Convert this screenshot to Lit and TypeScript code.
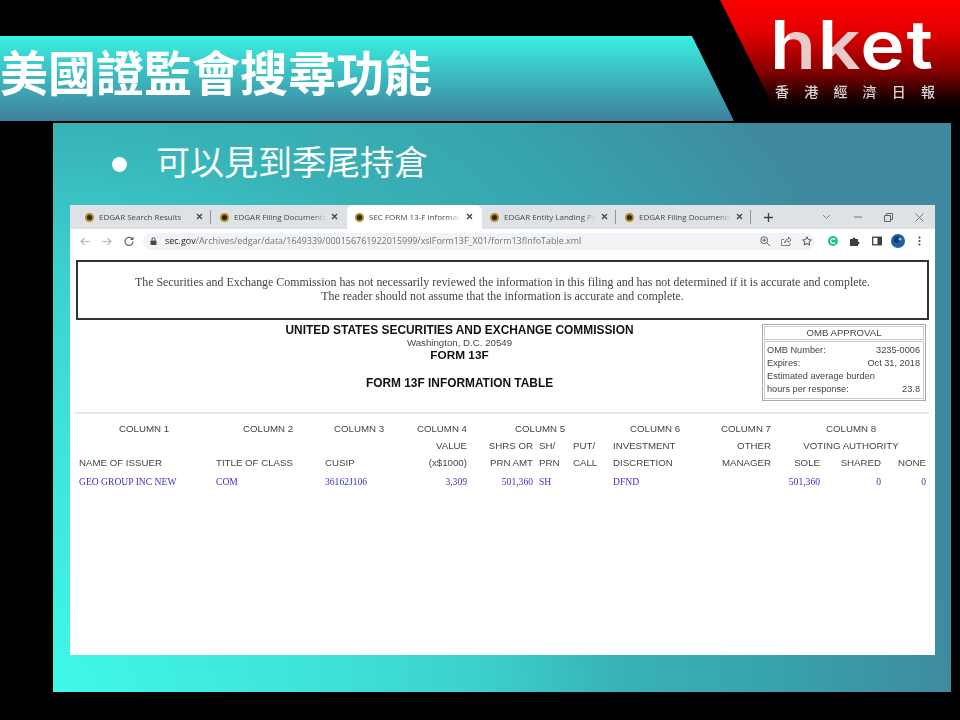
import { LitElement, html, css, svg } from "lit";
import { customElement } from "lit/decorators.js";

const tabs = [
  { t: "EDGAR Search Results", sep: true },
  { t: "EDGAR Filing Documents", sep: false },
  { t: "SEC FORM 13-F Information", active: true, sep: false },
  { t: "EDGAR Entity Landing Page", sep: true },
  { t: "EDGAR Filing Documents", sep: true },
];

const ic = (w: number, h: number, body: unknown) =>
  html`<svg width=${w} height=${h} viewBox="0 0 ${w} ${h}" fill="none">${body}</svg>`;

@customElement("app-root")
export class AppRoot extends LitElement {
  static styles = css`
    :host { display: block; width: 960px; height: 720px; background: #000; overflow: hidden; position: relative; font-family: "Liberation Sans", sans-serif; }
    .logo { position: absolute; top: 0; right: 0; width: 240px; height: 112px; background: linear-gradient(to bottom, #ff0000 0%, #e00000 30%, #8a0000 62%, #1a0000 88%, #000 100%); clip-path: polygon(0 0, 100% 0, 100% 100%, 56px 100%); filter: blur(.5px); }
    .hket { position: absolute; left: 50px; top: 9px; height: 72px; font: 600 67px/72px Inter, sans-serif; letter-spacing: 1.5px; color: transparent; transform: scaleX(1.12); transform-origin: 0 0; background: linear-gradient(to right, #fff 0 17px, #e8caca 18px 38px, #fff 39px 55px, #e8caca 56px 80px, #fff 81px); -webkit-background-clip: text; background-clip: text; }
    .hk-sub { position: absolute; left: 55px; top: 83px; font: 500 14px/16px "Noto Sans CJK TC", sans-serif; color: #d8d8d8; letter-spacing: 15.2px; white-space: nowrap; }
    .band { margin-top: 36px; height: 85px; width: 734px; background: linear-gradient(to bottom, #38f0e4 0%, #3cbcc0 45%, #3f7f9c 100%); clip-path: polygon(0 0, 692px 0, 100% 100%, 0 100%); }
    h1 { margin: 0; padding-top: 4px; font: 700 48px/60px "Noto Sans CJK TC", sans-serif; color: #fff; white-space: nowrap; filter: blur(.3px); }
    .panel { margin: 2px 9px 0 53px; height: 569px; box-sizing: border-box; padding: 0 16px 37px 17px; background: radial-gradient(circle at 0 100%, #40f8e8 0, #3ee4da 250px, #3cd0cc 427px, #38b2b6 569px, #37a3ac 723px, #3f8a9e 898px); display: flex; flex-direction: column; }
    .bullet { height: 82px; padding: 0 0 6px 42px; box-sizing: border-box; display: flex; align-items: center; gap: 29px; color: #fff; font: 400 34px/40px "Noto Sans CJK TC", sans-serif; }
    .dot { width: 15px; height: 15px; border-radius: 50%; background: #fff; margin-top: 6px; }
    .browser { flex: 1; background: #fff; display: flex; flex-direction: column; filter: blur(.35px); }
    .tabs { height: 24px; background: #dee1e6; display: flex; align-items: stretch; padding-left: 7px; position: relative; }
    .tab { width: 135px; flex: none; box-sizing: border-box; display: flex; align-items: center; padding-left: 8px; position: relative; font: 400 8px/10px "Open Sans", sans-serif; color: #45484c; }
    .tab.active { background: #fff; border-radius: 6px 6px 0 0; }
    .tab.sep::after { content: ""; position: absolute; right: 1px; top: 5px; height: 14px; width: 1px; background: #8f9296; }
    .fav { width: 9px; height: 9px; border-radius: 50%; background: #2a2410; box-sizing: border-box; border: 2px solid #b08a20; flex: none; margin-right: 5px; }
    .ttl { width: 92px; height: 11px; overflow: hidden; white-space: nowrap; -webkit-mask-image: linear-gradient(to right, #000 85%, transparent 100%); mask-image: linear-gradient(to right, #000 85%, transparent 100%); }
    .x { position: absolute; left: 119px; top: 8px; display: flex; }
    .plus { margin-left: 12px; align-self: center; display: flex; }
    .win { margin-left: auto; display: flex; align-items: center; gap: 0; padding-right: 0; }
    .win span { width: 31px; display: flex; justify-content: center; }
    .bar { height: 24px; background: #fff; display: flex; align-items: center; padding-left: 10px; }
    .nav { display: flex; align-items: center; gap: 12px; width: 63px; }
    .url { width: 672px; height: 17px; border-radius: 9px; background: #f1f3f4; display: flex; align-items: center; padding: 0 0 1px 7px; box-sizing: border-box; font: 400 8.95px/12px "Open Sans", sans-serif; color: #70757a; white-space: nowrap; gap: 8px; position: relative; }
    .url b { font-weight: 400; color: #202124; }
    .uico { margin-left: auto; display: flex; gap: 11px; padding-right: 3px; align-items: center; }
    .ext { display: flex; align-items: center; gap: 12px; margin-left: 13px; }
    .avatar { margin-left: -3px; display: flex; }
    .dots { margin-left: 1px; display: flex; }
    .page { flex: 1; padding: 7px 6px 0; color: #333; }
    .notice { height: 60px; box-sizing: border-box; border: 2px solid #333; display: flex; flex-direction: column; justify-content: center; align-items: center; font: 400 11.9px/14px "Liberation Serif", serif; color: #444; padding-bottom: 2px; white-space: nowrap; }
    .head { display: flex; height: 92px; box-sizing: border-box; padding: 4px 3px 0 81px; }
    .htext { flex: 1; text-align: center; color: #111; }
    .h-a { font: 700 11.9px/12px "Liberation Sans", sans-serif; }
    .h-b { font: 400 9.7px/13px "Liberation Sans", sans-serif; color: #444; }
    .h-c { font: 700 11.8px/12px "Liberation Sans", sans-serif; }
    .h-d { font: 700 11.9px/12px "Liberation Sans", sans-serif; margin-top: 16px; }
    .omb { width: 164px; height: 77px; box-sizing: border-box; border: 1px solid #aaa; padding: 1px; font: 400 9.2px/13px "Liberation Sans", sans-serif; color: #444; display: flex; flex-direction: column; gap: 1px; }
    .omb-h { height: 14px; border: 1px solid #ccc; box-sizing: border-box; text-align: center; font-size: 9.6px; line-height: 12px; }
    .omb-b { flex: 1; border: 1px solid #ccc; padding: 2px 3px 0 2px; }
    .omb-r { display: flex; justify-content: space-between; }
    .rule { height: 2px; background: #e4e4e4; margin-left: -1px; }
    .grid { display: grid; grid-template-columns: 137px 109px 68px 74px 66px 40px 40px 84px 74px 49px 61px 45px; grid-auto-rows: 17px; margin: 6px 0 0 3px; font: 400 9.7px/17px "Liberation Sans", sans-serif; color: #444; white-space: nowrap; }
    .c { text-align: center; }
    .r { text-align: right; }
    .v { color: #3636c8; font: 400 9.6px/21px "Liberation Serif", serif; }
    .s5 { grid-column: span 3; }
    .s3 { grid-column: span 3; padding-left: 5px; }
    .pr7 { padding-right: 7px; }
    .pr5 { padding-right: 5px; }
    .pl6 { padding-left: 6px; }
  `;

  render() {
    const stroke = "#5f6368";
    const x = ic(7, 7, svg`<path d="M1 1l5 5M6 1L1 6" stroke="#3c4043" stroke-width="1.2"/>`);
    return html`
      <div class="logo">
        <span class="hket">hket</span>
        <span class="hk-sub">香港經濟日報</span>
      </div>
      <div class="band"><h1>美國證監會搜尋功能</h1></div>
      <div class="panel">
        <div class="bullet"><span class="dot"></span><span>可以見到季尾持倉</span></div>
        <div class="browser">
          <div class="tabs">
            ${tabs.map(
              (t) => html`<div class="tab ${t.active ? "active" : ""} ${t.sep ? "sep" : ""}">
                <span class="fav"></span><span class="ttl">${t.t}</span><span class="x">${x}</span>
              </div>`
            )}
            <span class="plus">${ic(9, 9, svg`<path d="M4.5 0v9M0 4.5h9" stroke="#3c4043" stroke-width="1.3"/>`)}</span>
            <div class="win">
              <span>${ic(9, 6, svg`<path d="M1 1l3.5 3.5L8 1" stroke="#80868b" stroke-width="1"/>`)}</span>
              <span>${ic(8, 2, svg`<path d="M0 1h8" stroke="#70757a" stroke-width="1"/>`)}</span>
              <span>${ic(9, 9, svg`<path d="M2.5 2V.5h6v6H7M.5 2.500h6v6h-6z" stroke="#5f6368" stroke-width="1"/>`)}</span>
              <span>${ic(9, 9, svg`<path d="M.5.5l8 8M8.500.5l-8 8" stroke="#70757a" stroke-width="1"/>`)}</span>
            </div>
          </div>
          <div class="bar">
            <div class="nav">
              ${ic(10, 9, svg`<path d="M10 4.500H1M4.500 1L1 4.500 4.500 8" stroke="#b4b7ba" stroke-width="1.100"/>`)}
              ${ic(10, 9, svg`<path d="M0 4.500h9M5.500 1L9 4.500 5.500 8" stroke="#b4b7ba" stroke-width="1.100"/>`)}
              ${ic(10, 10, svg`<path d="M8.500 3.500A4 4 0 1 0 9 5.500" stroke=${stroke} stroke-width="1.200"/><path d="M9.500 .5v3.500H6z" fill=${stroke}/>`)}
            </div>
            <div class="url">
              ${ic(7, 8, svg`<rect x=".5" y="3.500" width="6" height="4.500" rx=".8" fill="#45484c"/><path d="M2 3.500V2.200a1.500 1.500 0 0 1 3 0v1.300" stroke="#45484c"/>`)}
              <span><b>sec.gov</b>/Archives/edgar/data/1649339/000156761922015999/xslForm13F_X01/form13fInfoTable.xml</span>
              <span class="uico">
                ${ic(10, 10, svg`<circle cx="4.200" cy="4.200" r="3.400" stroke=${stroke}/><path d="M6.800 6.800L10 10M2.500 4.200h3.400M4.200 2.500v3.400" stroke=${stroke}/>`)}
                ${ic(10, 10, svg`<path d="M3 3.500H.5v6h8.500V7M3.500 7c.3-2.500 2-4 4-4V1L10 4 7.500 6.500V5C5.800 5 4.500 5.500 3.500 7z" stroke=${stroke} stroke-width=".8"/>`)}
                ${ic(10, 10, svg`<path d="M5 .8l1.300 2.800 3 .4-2.200 2 .6 3L5 7.500 2.300 9l.6-3-2.200-2 3-.4z" stroke="#3c4043" stroke-width=".9"/>`)}
              </span>
            </div>
            <div class="ext">
              ${ic(10, 10, svg`<circle cx="5" cy="5" r="5" fill="#15c39a"/><path d="M7 3.500A2.400 2.400 0 1 0 7 6.500" stroke="#fff" stroke-width="1.200"/>`)}
              ${ic(10, 10, svg`<path d="M0 3h2.500a1.500 1.500 0 0 1 3 0H8v2.500a1.500 1.500 0 0 1 0 3V10H0z" fill="#3c4043"/>`)}
              ${ic(10, 10, svg`<rect x=".7" y="1.200" width="8.600" height="7.600" stroke="#3c4043" stroke-width="1.300"/><rect x="5.500" y="1" width="4" height="8" fill="#3c4043"/>`)}
              <span class="avatar">${ic(14, 14, svg`<circle cx="7" cy="7" r="7" fill="#1d5fa8"/><path d="M3 5c2-3 5-3 7-1 1 2-2 3-3 5-2 0-5-1-4-4z" fill="#0d3560"/><circle cx="9" cy="5" r="1.500" fill="#8fc4ea"/>`)}</span>
              <span class="dots">${ic(3, 10, svg`<circle cx="1.500" cy="1.500" r="1" fill="#3c4043"/><circle cx="1.500" cy="5" r="1" fill="#3c4043"/><circle cx="1.500" cy="8.500" r="1" fill="#3c4043"/>`)}</span>
            </div>
          </div>
          <div class="page">
            <div class="notice">
              <div>The Securities and Exchange Commission has not necessarily reviewed the information in this filing and has not determined if it is accurate and complete.</div>
              <div>The reader should not assume that the information is accurate and complete.</div>
            </div>
            <div class="head">
              <div class="htext">
                <div class="h-a">UNITED STATES SECURITIES AND EXCHANGE COMMISSION</div>
                <div class="h-b">Washington, D.C. 20549</div>
                <div class="h-c">FORM 13F</div>
                <div class="h-d">FORM 13F INFORMATION TABLE</div>
              </div>
              <div class="omb">
                <div class="omb-h">OMB APPROVAL</div>
                <div class="omb-b">
                  <div class="omb-r"><span>OMB Number:</span><span>3235-0006</span></div>
                  <div class="omb-r"><span>Expires:</span><span>Oct 31, 2018</span></div>
                  <div>Estimated average burden</div>
                  <div class="omb-r"><span>hours per response:</span><span>23.8</span></div>
                </div>
              </div>
            </div>
            <div class="rule"></div>
            <div class="grid">
              <div class="c pr7">COLUMN 1</div><div class="c pr5">COLUMN 2</div><div class="c">COLUMN 3</div><div class="r">COLUMN 4</div>
              <div class="c s5">COLUMN 5</div><div class="c">COLUMN 6</div><div class="r">COLUMN 7</div><div class="c s3">COLUMN 8</div>

              <div></div><div></div><div></div><div class="r">VALUE</div><div class="r">SHRS OR</div><div class="pl6">SH/</div><div>PUT/</div><div>INVESTMENT</div><div class="r">OTHER</div><div class="c s3">VOTING AUTHORITY</div>

              <div>NAME OF ISSUER</div><div>TITLE OF CLASS</div><div>CUSIP</div><div class="r">(x$1000)</div><div class="r">PRN AMT</div><div class="pl6">PRN</div><div>CALL</div><div>DISCRETION</div><div class="r">MANAGER</div><div class="r">SOLE</div><div class="r">SHARED</div><div class="r">NONE</div>

              <div class="v">GEO GROUP INC NEW</div><div class="v">COM</div><div class="v">36162J106</div><div class="v r">3,309</div><div class="v r">501,360</div><div class="v pl6">SH</div><div class="v"></div><div class="v">DFND</div><div class="v"></div><div class="v r">501,360</div><div class="v r">0</div><div class="v r">0</div>
            </div>
          </div>
        </div>
      </div>
    `;
  }
}
